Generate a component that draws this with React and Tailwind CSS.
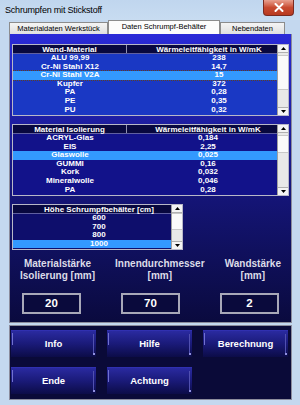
import React from "react";

const F = { fontFamily: '"Liberation Sans", Arial, sans-serif' };

function ScrollBar({ h, thumbTop, thumbH }) {
  return (
    <div className="flex flex-col w-[11px] bg-[#e8e8e8] border-l border-[#a0a0a0]" style={{ height: h }}>
      <div className="h-[8px] bg-[#f4f4f4] border-b border-[#b0b0b0] flex items-center justify-center">
        <svg width="5" height="3" viewBox="0 0 5 3"><path d="M0 3 L2.5 0 L5 3 Z" fill="#000" /></svg>
      </div>
      <div className="flex-1 relative">
        <div className="absolute left-0 right-0 bg-[#fafafa] border-y border-[#c8c8c8]" style={{ top: thumbTop, height: thumbH }} />
      </div>
      <div className="h-[8px] bg-[#f4f4f4] border-t border-[#b0b0b0] flex items-center justify-center">
        <svg width="5" height="3" viewBox="0 0 5 3"><path d="M0 0 L2.5 3 L5 0 Z" fill="#000" /></svg>
      </div>
    </div>
  );
}

function Table2Col({ h1, h2, rows, sel, bodyBg, numPl, headPl, focus, sb }) {
  return (
    <div className="flex border border-[#b8b8c8] w-[277px] h-[72px] overflow-hidden">
      <div className="flex-1 flex flex-col overflow-hidden">
        <div className="flex h-[9px] bg-[#08083e] text-white font-bold text-[8px] leading-[9px] border-b border-[#6060a0]">
          <div className="w-[114px] text-center border-r border-[#9090b0]">{h1}</div>
          <div className="flex-1 text-center" style={{ paddingLeft: headPl }}>{h2}</div>
        </div>
        <div className={"flex-1 " + bodyBg}>
          {rows.map((r, i) => (
            <div
              key={i}
              className={
                "flex h-[8.6px] leading-[8.6px] text-white font-bold text-[8px] " +
                (i === sel ? "bg-[#3399ff]" : "") +
                (i === sel && focus ? " outline outline-1 outline-dotted outline-[#604020]" : "")
              }
            >
              <div className="w-[114px] text-center">{r[0]}</div>
              <div className="flex-1 text-center" style={{ paddingLeft: numPl }}>{r[1]}</div>
            </div>
          ))}
        </div>
      </div>
      <ScrollBar h={70} thumbTop={2} thumbH={sb[1]} />
    </div>
  );
}

function Btn({ children }) {
  return (
    <div className="relative w-[85px] h-[27px] bg-linear-to-b from-[#2a2aa0] via-[#1a1a78] to-[#0c0c48] flex items-center justify-center text-white font-bold text-[9.5px] border-t border-[#3030b0]">
      <div className="absolute left-[1px] top-[2px] w-[1px] h-[12px] bg-[#7070d0]" />
      <div className="absolute right-[2px] top-[3px] w-[1px] h-[20px] bg-[#5050b0]" />
      <div className="absolute right-[1px] bottom-[2px] w-[2px] h-[2px] bg-[#9090e0]" />
      {children}
    </div>
  );
}

function Label({ l1, l2 }) {
  return (
    <div className="flex flex-col items-center text-[#dcdce8] font-bold text-[10px] leading-[12px]">
      <div>{l1}</div>
      <div>{l2}</div>
    </div>
  );
}

function Input({ v }) {
  return (
    <div className="w-[59px] h-[21px] border-2 border-[#a8a8b8] bg-[#0a0a3c] flex items-center justify-center text-white font-bold text-[11.5px]">
      {v}
    </div>
  );
}

export default function App() {
  const t1 = [["ALU 99,99", "238"], ["Cr-Ni Stahl X12", "14,7"], ["Cr-Ni Stahl V2A", "15"], ["Kupfer", "372"], ["PA", "0,28"], ["PE", "0,35"], ["PU", "0,32"]];
  const t2 = [["ACRYL-Glas", "0,184"], ["EIS", "2,25"], ["Glaswolle", "0,025"], ["GUMMI", "0,16"], ["Kork", "0,032"], ["Mineralwolle", "0,046"], ["PA", "0,28"]];
  const t3 = ["600", "700", "800", "1000"];
  return (
    <div className="w-[300px] h-[405px] bg-[#c4d8ef] flex flex-col overflow-hidden" style={F}>
      <div className="h-[20px] flex justify-between bg-linear-to-b from-[#c0d6ee] to-[#c8dcf1]">
        <div className="pl-[5px] pt-[4px] text-[9px] tracking-[-0.2px] text-black">Schrumpfen mit Stickstoff</div>
        <div className="mr-[6px] w-[31px] h-[16px] rounded-b-[4px] bg-linear-to-b from-[#e8a090] via-[#c84a30] to-[#b83a20] border border-[#7a2a20] border-t-0 flex items-center justify-center">
          <svg width="10" height="9" viewBox="0 0 10 9">
            <path d="M1.5 1 L8.5 8 M8.5 1 L1.5 8" stroke="#fff" strokeWidth="2" strokeLinecap="round" />
          </svg>
        </div>
      </div>
      <div className="ml-[9px] w-[283px] flex flex-col">
        <div className="h-[14px] flex items-end">
          <div className="w-[99px] h-[12px] bg-linear-to-b from-[#f4f4f4] to-[#e0e0e0] border border-b-0 border-[#8c8c8c] text-[7.5px] leading-[11px] text-center text-black">
            Materialdaten Werkstück
          </div>
          <div className="w-[112px] h-[14px] bg-[#fcfcfc] border border-b-0 border-[#8c8c8c] text-[7.5px] leading-[12px] text-center text-black">
            Daten Schrumpf-Behälter
          </div>
          <div className="w-[65px] h-[12px] bg-linear-to-b from-[#f4f4f4] to-[#e0e0e0] border border-b-0 border-[#8c8c8c] text-[7.5px] leading-[11px] text-center text-black">
            Nebendaten
          </div>
        </div>
        <div className="h-[289px] bg-linear-to-b from-[#2a2ad8] via-[#161680] to-[#0a0a3e] border-x border-b border-[#8c8c9c] px-[2px] pt-[10px] flex flex-col">
          <Table2Col h1="Wand-Material" h2="Wärmeleitfähigkeit in W/mK" rows={t1} sel={2} bodyBg="bg-[#1a38c4]" numPl={34} headPl={14} focus sb={[2, 35]} />
          <div className="h-[8px]" />
          <Table2Col h1="Material Isolierung" h2="Wärmeleitfähigkeit in W/mK" rows={t2} sel={2} bodyBg="bg-[#12128a]" numPl={12} headPl={12} sb={[0, 18]} />
          <div className="h-[8px]" />
          <div className="flex border border-[#b8b8c8] w-[171px] h-[46px] overflow-hidden">
            <div className="flex-1 flex flex-col">
              <div className="h-[9px] bg-[#08083e] text-white font-bold text-[8px] leading-[9px] text-center pl-[14px] border-b border-[#6060a0]">Höhe Schrumpfbehälter [cm]</div>
              <div className="flex-1 bg-[#0e0e6c]">
                {t3.map((v, i) => (
                  <div key={i} className={"h-[8.6px] leading-[8.6px] text-white font-bold text-[8px] text-center pl-[14px] " + (i === 3 ? "bg-[#3399ff]" : "")}>{v}</div>
                ))}
              </div>
            </div>
            <ScrollBar h={44} thumbTop={0} thumbH={17} />
          </div>
          <div className="mt-[8px] flex justify-between px-[8px]">
            <Label l1="Materialstärke" l2="Isolierung [mm]" />
            <Label l1="Innendurchmesser" l2="[mm]" />
            <Label l1="Wandstärke" l2="[mm]" />
          </div>
          <div className="mt-[11px] flex justify-between px-[10px]">
            <Input v="20" />
            <Input v="70" />
            <Input v="2" />
          </div>
        </div>
        <div className="mt-[2px] h-[75px] bg-[#0a0a38] border border-[#8c8c9c] px-[1px] pt-[4px] flex flex-col gap-[10px]">
          <div className="flex gap-[11px]">
            <Btn>Info</Btn>
            <Btn>Hilfe</Btn>
            <Btn>Berechnung</Btn>
          </div>
          <div className="flex gap-[11px]">
            <Btn>Ende</Btn>
            <Btn>Achtung</Btn>
          </div>
        </div>
      </div>
    </div>
  );
}
